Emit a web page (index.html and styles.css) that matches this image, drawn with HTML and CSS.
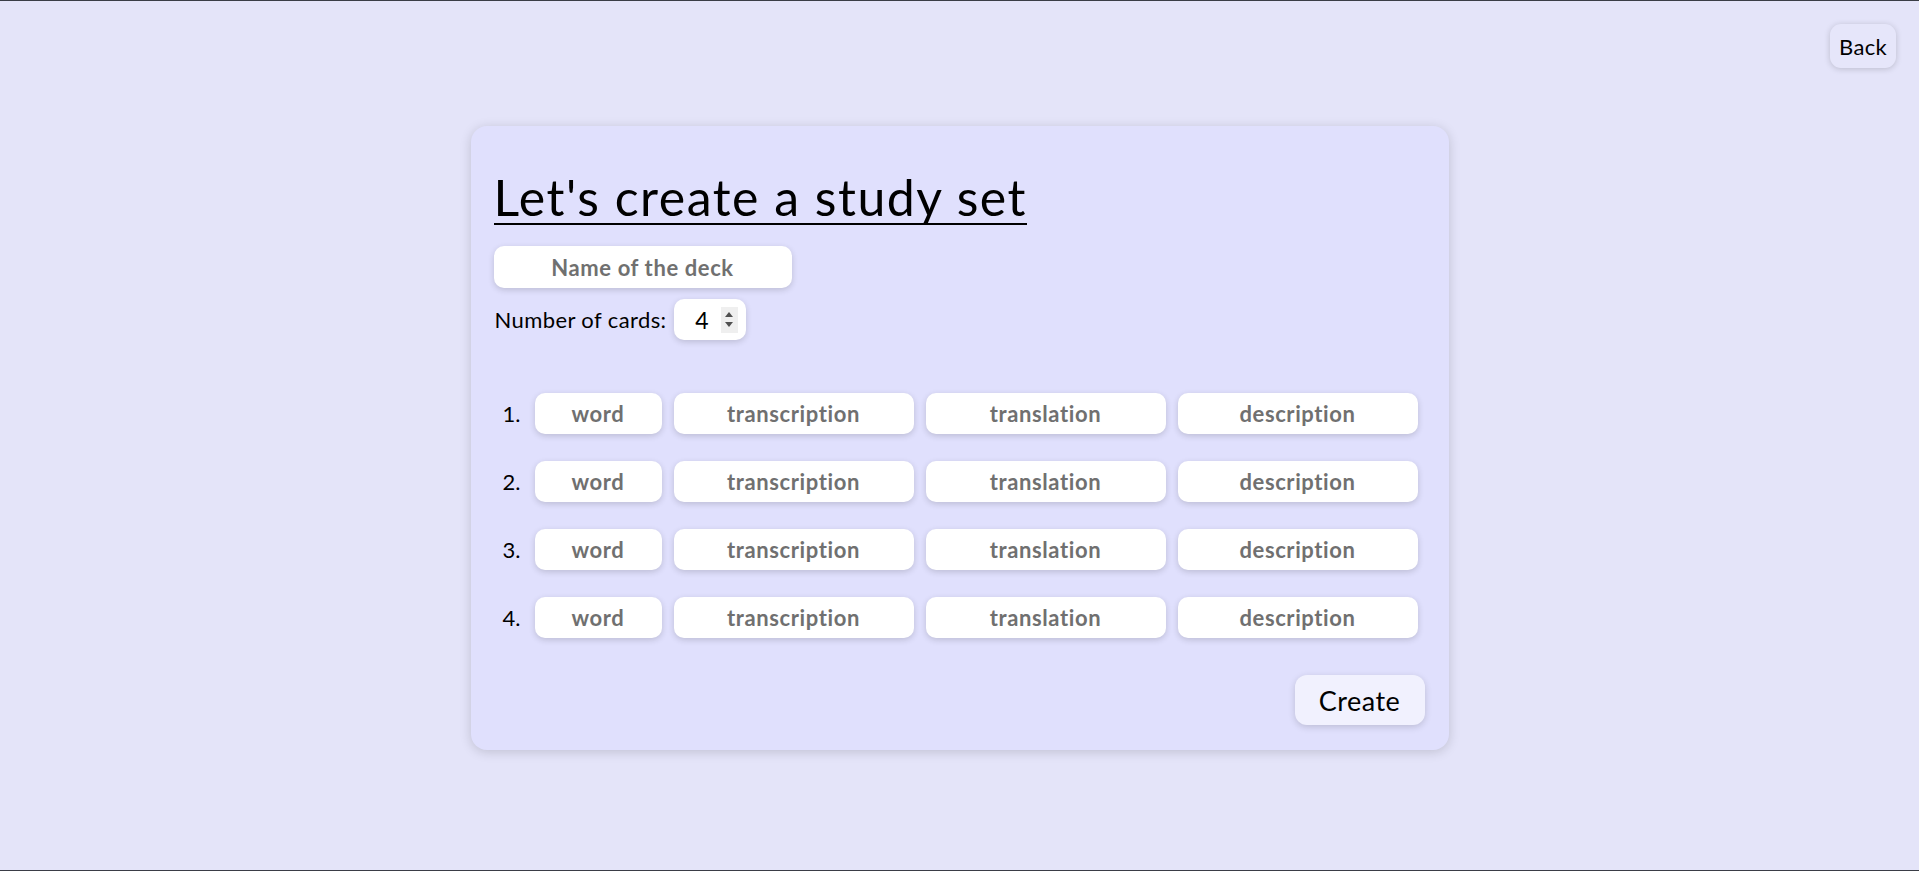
FILE: index.html
```html
<!DOCTYPE html>
<html lang="en">
<head>
<meta charset="utf-8">
<title>Create a study set</title>
<link rel="stylesheet" href="styles.css">
</head>
<body>
<div class="screen">
  <header class="topbar">
    <button class="back-btn" type="button">Back</button>
  </header>
  <main class="card">
    <h1 class="title">Let's create a study set</h1>
    <input class="field deck-name" type="text" placeholder="Name of the deck">
    <div class="count-row">
      <span class="count-label">Number of cards:</span>
      <div class="count-input">
        <span class="count-value">4</span>
        <span class="spinner"><span class="arrow up"></span><span class="arrow down"></span></span>
      </div>
    </div>
    <div class="rows">
      <div class="row">
        <span class="num">1.</span>
        <input class="field f-word" type="text" placeholder="word">
        <input class="field f-wide" type="text" placeholder="transcription">
        <input class="field f-wide" type="text" placeholder="translation">
        <input class="field f-wide" type="text" placeholder="description">
      </div>
      <div class="row">
        <span class="num">2.</span>
        <input class="field f-word" type="text" placeholder="word">
        <input class="field f-wide" type="text" placeholder="transcription">
        <input class="field f-wide" type="text" placeholder="translation">
        <input class="field f-wide" type="text" placeholder="description">
      </div>
      <div class="row">
        <span class="num">3.</span>
        <input class="field f-word" type="text" placeholder="word">
        <input class="field f-wide" type="text" placeholder="transcription">
        <input class="field f-wide" type="text" placeholder="translation">
        <input class="field f-wide" type="text" placeholder="description">
      </div>
      <div class="row">
        <span class="num">4.</span>
        <input class="field f-word" type="text" placeholder="word">
        <input class="field f-wide" type="text" placeholder="transcription">
        <input class="field f-wide" type="text" placeholder="translation">
        <input class="field f-wide" type="text" placeholder="description">
      </div>
    </div>
    <div class="actions">
      <button class="create-btn" type="button">Create</button>
    </div>
  </main>
</div>
</body>
</html>
```

FILE: styles.css
```css
* { box-sizing: border-box; }

html, body {
  margin: 0;
  padding: 0;
  height: 100%;
}

body {
  background: #e4e4f9;
  font-family: "Trebuchet MS", Lato, "Noto Sans", sans-serif;
  color: #000;
}

.screen {
  height: 871px;
  border-top: 1px solid #3a3d46;
  border-bottom: 1px solid #3a3d46;
  display: flex;
  flex-direction: column;
  overflow: hidden;
}

.topbar {
  display: flex;
  justify-content: flex-end;
  padding: 23px 23px 0 0;
}

.back-btn {
  width: 66px;
  height: 44px;
  border: none;
  border-radius: 11px;
  background: #e6e6fa;
  box-shadow: 0 1px 6px rgba(0, 0, 0, 0.18);
  font-family: inherit;
  font-size: 22px;
  letter-spacing: 0.3px;
  color: #000;
  padding: 0;
}

.card {
  align-self: center;
  width: 978px;
  margin-top: 58px;
  padding: 46px 24px 25px 23px;
  background: #e0e0fd;
  border-radius: 16px;
  box-shadow: 0 2px 12px rgba(0, 0, 0, 0.16);
  display: flex;
  flex-direction: column;
  align-items: flex-start;
}

.title {
  margin: 0;
  display: inline-block;
  font-size: 50px;
  font-weight: 400;
  line-height: 51px;
  letter-spacing: 1.5px;
  border-bottom: 2px solid #000;
}

.field {
  border: none;
  outline: none;
  background: #fff;
  border-radius: 10px;
  box-shadow: 0 2px 6px rgba(0, 0, 0, 0.16);
  font-family: inherit;
  font-weight: 700;
  font-size: 22px;
  letter-spacing: 0.6px;
  text-align: center;
  color: #333;
  padding: 0 6px;
}

.field::placeholder {
  color: #707070;
  opacity: 1;
}

.deck-name {
  margin-top: 21px;
  width: 298px;
  height: 42px;
}

.count-row {
  margin-top: 11px;
  display: flex;
  align-items: center;
  gap: 7px;
  padding-left: 1px;
}

.count-label {
  font-size: 22px;
  letter-spacing: 0.4px;
}

.count-input {
  width: 72px;
  height: 41px;
  background: #fff;
  border-radius: 10px;
  box-shadow: 0 2px 6px rgba(0, 0, 0, 0.16);
  display: flex;
  align-items: center;
  justify-content: flex-end;
  gap: 12px;
  padding-right: 8px;
}

.count-value {
  font-size: 23px;
}

.spinner {
  width: 17px;
  height: 26px;
  background: #efefef;
  display: flex;
  flex-direction: column;
  align-items: center;
  justify-content: center;
  gap: 5px;
}

.arrow {
  width: 0;
  height: 0;
  border-left: 4px solid transparent;
  border-right: 4px solid transparent;
}

.arrow.up { border-bottom: 5px solid #505050; }
.arrow.down { border-top: 5px solid #505050; }

.rows {
  margin-top: 53px;
  margin-left: 9px;
  display: flex;
  flex-direction: column;
  gap: 27px;
}

.row {
  display: flex;
  align-items: center;
  gap: 12px;
}

.num {
  width: 20px;
  font-size: 22px;
  text-align: left;
}

.f-word {
  width: 127px;
  height: 41px;
}

.f-wide {
  width: 240px;
  height: 41px;
}

.actions {
  align-self: stretch;
  display: flex;
  justify-content: flex-end;
  margin-top: 37px;
}

.create-btn {
  width: 130px;
  height: 50px;
  border: none;
  border-radius: 12px;
  background: #f1f1fe;
  box-shadow: 0 2px 7px rgba(0, 0, 0, 0.16);
  font-family: inherit;
  font-size: 27px;
  letter-spacing: 0.5px;
  color: #000;
  padding: 0;
}
```
